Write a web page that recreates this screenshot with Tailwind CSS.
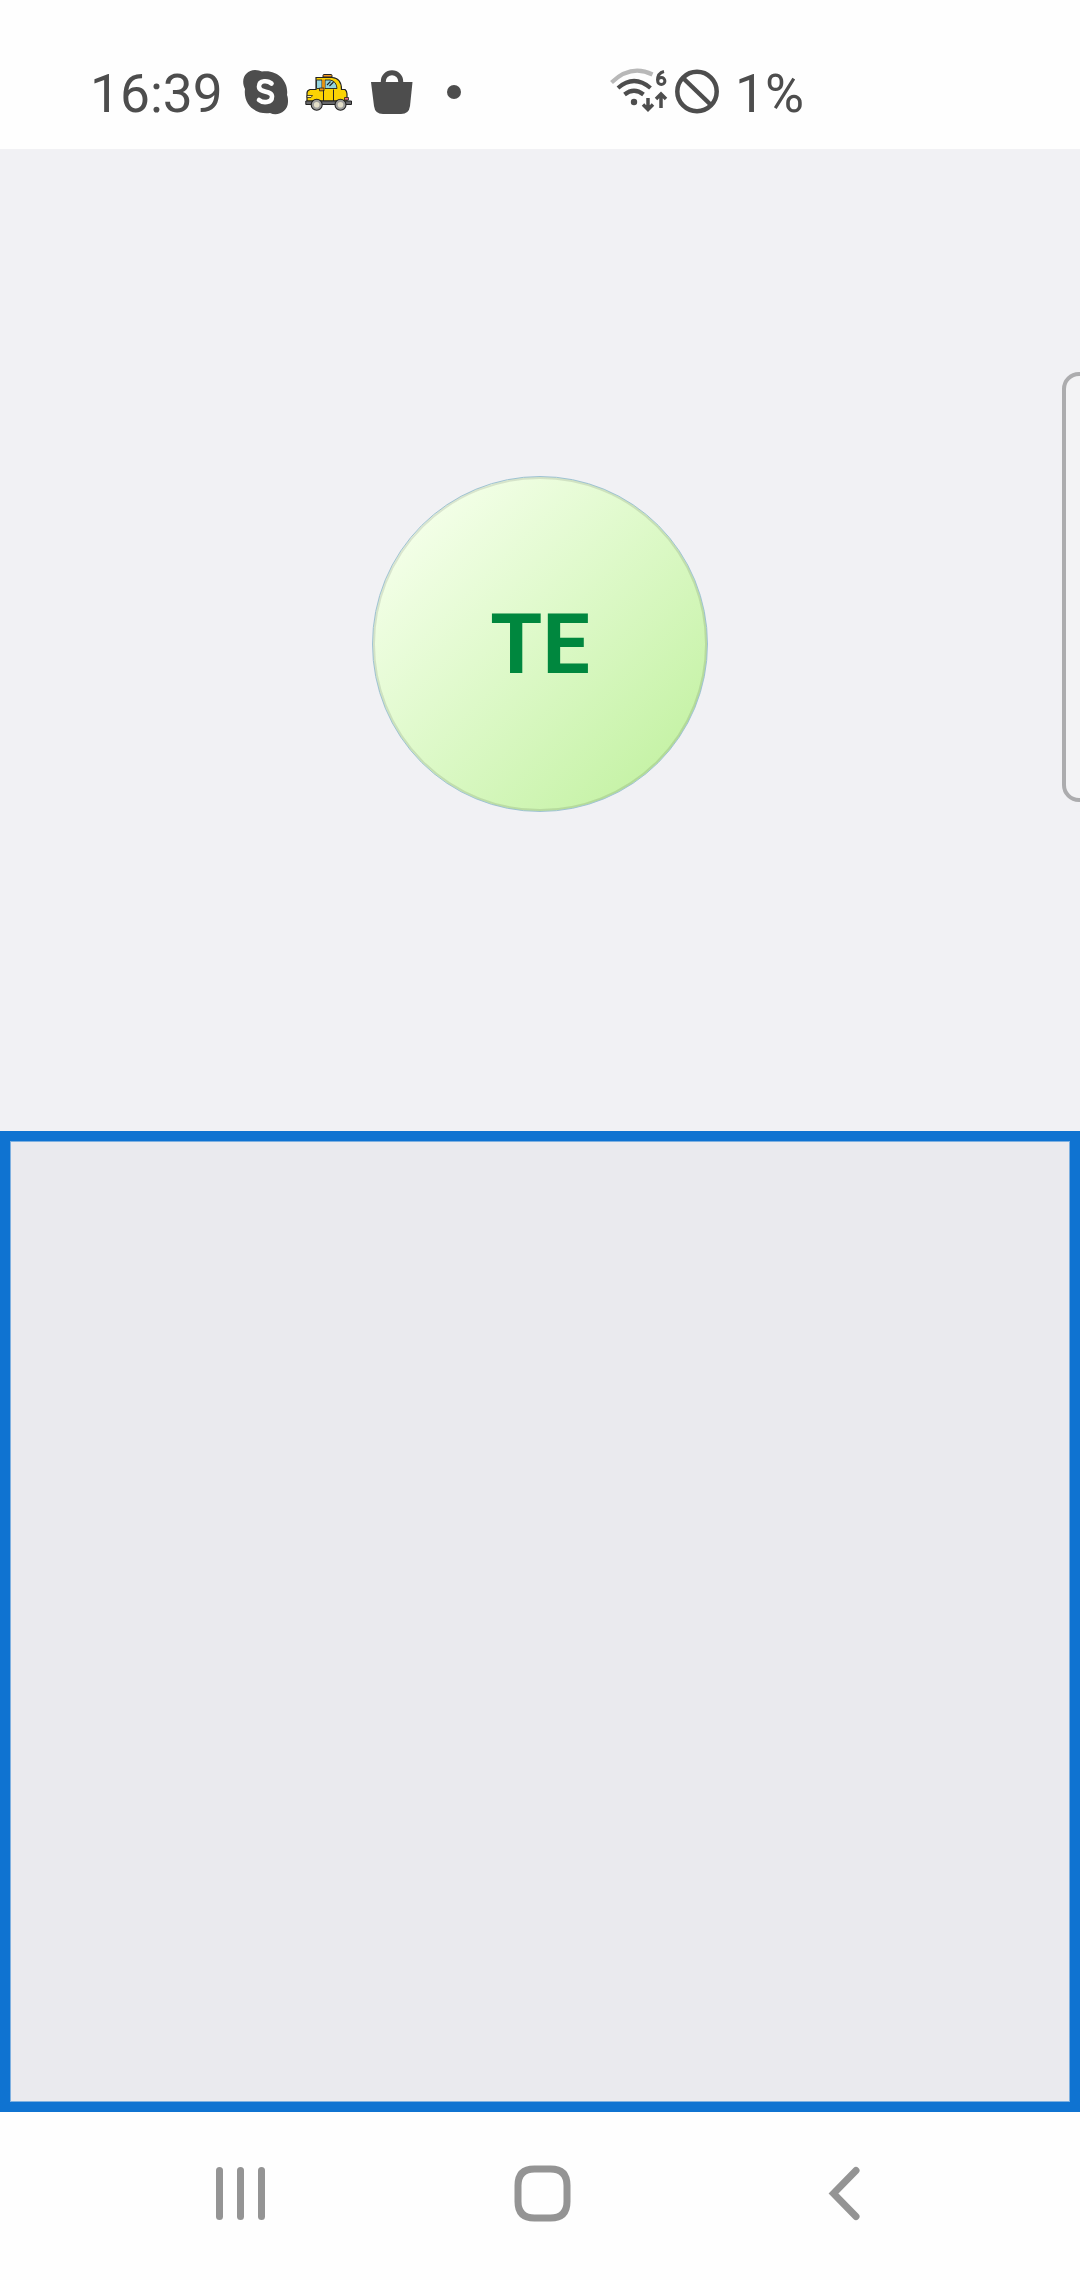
<!DOCTYPE html>
<html lang="en">
<head>
<meta charset="utf-8">
<title>Call</title>
<script src="https://cdn.jsdelivr.net/npm/@tailwindcss/browser@4"></script>
</head>
<body class="bg-[#fefefe]">
<div class="relative flex h-[2280px] w-[1080px] flex-col overflow-hidden bg-[#fefefe] font-['Roboto',sans-serif]">
  <header class="flex h-[149px] shrink-0 items-start pt-[60px] pl-[90px] text-[#4d4d4d]">
    <span class="mt-px w-[153px] text-[53.3px] leading-[66px]">16:39</span>
    <!-- Skype -->
    <svg class="mt-[9px] h-[47px] w-[46px]" viewBox="0 0 46 47">
      <path fill="#4d4d4d" d="M12 1C15 1 17 2 19 2.500C34 0 46 12 44 26C45 28 45 31 45 33C45 42 35 48 27 44C12 46 0 35 2 20C-3 10 3 1 12 1Z"/>
      <path d="M28.500 14.500C25.500 11.500 16 10.500 16 17.500C16 24.500 29 21 29 27.500C29 34.500 19.500 34 16 31" fill="none" stroke="#fefefe" stroke-width="4.600" stroke-linecap="round"/>
    </svg>
    <!-- Taxi -->
    <svg class="mt-[13px] ml-[16px] h-[40px] w-[48px]" viewBox="0 0 48 40">
      <path d="M18 4V2.500Q18 1.500 19 1.500H26Q27 1.500 27 2.500V4Z" fill="#f39a20" stroke="#222" stroke-width="1"/>
      <path d="M11 16.500V4.500H27Q36.500 5 36.500 16.500H40Q42 18 42 21V28H2V20Q2 17.500 5 16.500Z" fill="#fbd304" stroke="#222" stroke-width="1.200"/>
      <path d="M11.500 15.500V7H17V15.500ZM20 15.500V7H25Q31.500 8 32 15.500Z" fill="#95d5df" stroke="#222" stroke-width=".9"/>
      <path d="M17.200 6.500H19.800V16H17.200Z" fill="#e99214"/>
      <path d="M22 12L25.500 8.500M24.500 13L28.500 9" stroke="#222" stroke-width="1.100"/>
      <path d="M14.500 15H19V17.800H14.500Z" fill="#e99214" stroke="#222" stroke-width=".8"/>
      <path d="M18.500 17V28M28.500 16.500V28" stroke="#222" stroke-width="1"/>
      <path d="M2 22.500H7.500L6 24.500H2Z" fill="#fff3a0" stroke="#222" stroke-width=".8"/>
      <path d="M39.500 24.500H43.500V27H39.500Z" fill="#ef6e85" stroke="#222" stroke-width=".8"/>
      <path d="M.8 28H46.500V31.500H.8Z" fill="#66676a" stroke="#222" stroke-width="1"/>
      <circle cx="11.700" cy="31.800" r="5.500" fill="#9c9c9a" stroke="#222" stroke-width="1.100"/>
      <circle cx="11.700" cy="31.800" r="2.800" fill="#e4dfc9"/>
      <circle cx="35.500" cy="31.800" r="5.500" fill="#9c9c9a" stroke="#222" stroke-width="1.100"/>
      <circle cx="35.500" cy="31.800" r="2.800" fill="#e4dfc9"/>
    </svg>
    <!-- Shopping bag -->
    <svg class="mt-[10px] ml-[18px] h-[45px] w-[42px]" viewBox="0 0 42 45">
      <path d="M0 12H41.500L39 36Q38 44 30 44H12Q4 44 3 36Z" fill="#4d4d4d"/>
      <path d="M12.300 13V11.500A8.700 8.700 0 0 1 29.700 11.500V13" fill="none" stroke="#4d4d4d" stroke-width="5"/>
    </svg>
    <span class="mt-[25px] ml-[34px] size-[14px] rounded-full bg-[#4d4d4d]"></span>
    <!-- Wi-Fi 6 -->
    <svg class="mt-[8px] ml-[149px] h-[46px] w-[58px]" viewBox="0 0 58 46" fill="none">
      <path d="M1.500 17.500Q21 -1 42.500 9.500" transform="translate(0 -3)" stroke="#b8b8b8" stroke-width="4.200"/>
      <path d="M8 20Q24 6 40.500 20M14.500 26.500Q24 19 33.500 26.500" stroke="#4d4d4d" stroke-width="4.200"/>
      <circle cx="24" cy="34" r="3.200" fill="#4d4d4d"/>
      <path d="M38 30V41M33 36.500L38 41.500L43 36.500M51 40V27M46 31L51 26L56 31" stroke="#4d4d4d" stroke-width="3.500"/>
      <path d="M54 3.500Q47.500 5 47.500 12.500" stroke="#4d4d4d" stroke-width="3"/>
      <circle cx="51.300" cy="13" r="3.600" stroke="#4d4d4d" stroke-width="3"/>
    </svg>
    <!-- No signal -->
    <svg class="mt-[9px] ml-[7px] h-[46px] w-[46px]" viewBox="0 0 46 46" fill="none" stroke="#4d4d4d" stroke-width="4.500">
      <circle cx="22" cy="22.500" r="19.700"/>
      <path d="M8 9L36 36"/>
    </svg>
    <span class="mt-px ml-[14px] text-[53.3px] leading-[66px]">1%</span>
  </header>

  <main class="flex h-[982px] shrink-0 justify-center bg-[#f1f1f4] pt-[327px]">
    <div class="flex size-[336px] items-center justify-center rounded-full border border-[#9fc3d3] bg-linear-135 from-[#f4ffe9] from-12% to-[#c5f2a5] to-88%">
      <div class="flex size-[334px] shrink-0 items-center justify-center rounded-full border-2 border-black/10">
        <span class="pt-[2px] text-[84px] leading-none font-bold text-[#00873e]">TE</span>
      </div>
    </div>
  </main>

  <section class="h-[981px] shrink-0 border-[10px] border-[#0f73d1] bg-[#eaeaee]">
    <div class="h-full border border-[#7eb0e0]"></div>
  </section>

  <nav class="flex flex-1 items-start text-[#949494]">
    <div class="mt-[55px] ml-[216px] flex h-[53px] w-[49px] justify-between">
      <span class="w-[7px] rounded-full bg-[#949494]"></span>
      <span class="w-[7px] rounded-full bg-[#949494]"></span>
      <span class="w-[7px] rounded-full bg-[#949494]"></span>
    </div>
    <svg class="mt-[53px] ml-[249px] size-[57px]" viewBox="0 0 57 57" fill="none" stroke="#949494" stroke-width="7">
      <path d="M20.500 4H36.500Q53 4 53 20.500V36.500Q53 53 36.500 53H20.500Q4 53 4 36.500V20.500Q4 4 20.500 4Z"/>
    </svg>
    <svg class="mt-[54px] ml-[257px] h-[56px] w-[34px]" viewBox="0 0 34 56" fill="none" stroke="#949494" stroke-width="7" stroke-linecap="round">
      <path d="M28 4.500L5.500 27.500L28 50.500"/>
    </svg>
  </nav>

  <!-- Edge panel handle -->
  <div class="absolute top-[372px] -right-[17px] h-[430px] w-[35px] rounded-[17px] border-4 border-[#acacae] bg-[#f3f3f5]"></div>
</div>
</body>
</html>
